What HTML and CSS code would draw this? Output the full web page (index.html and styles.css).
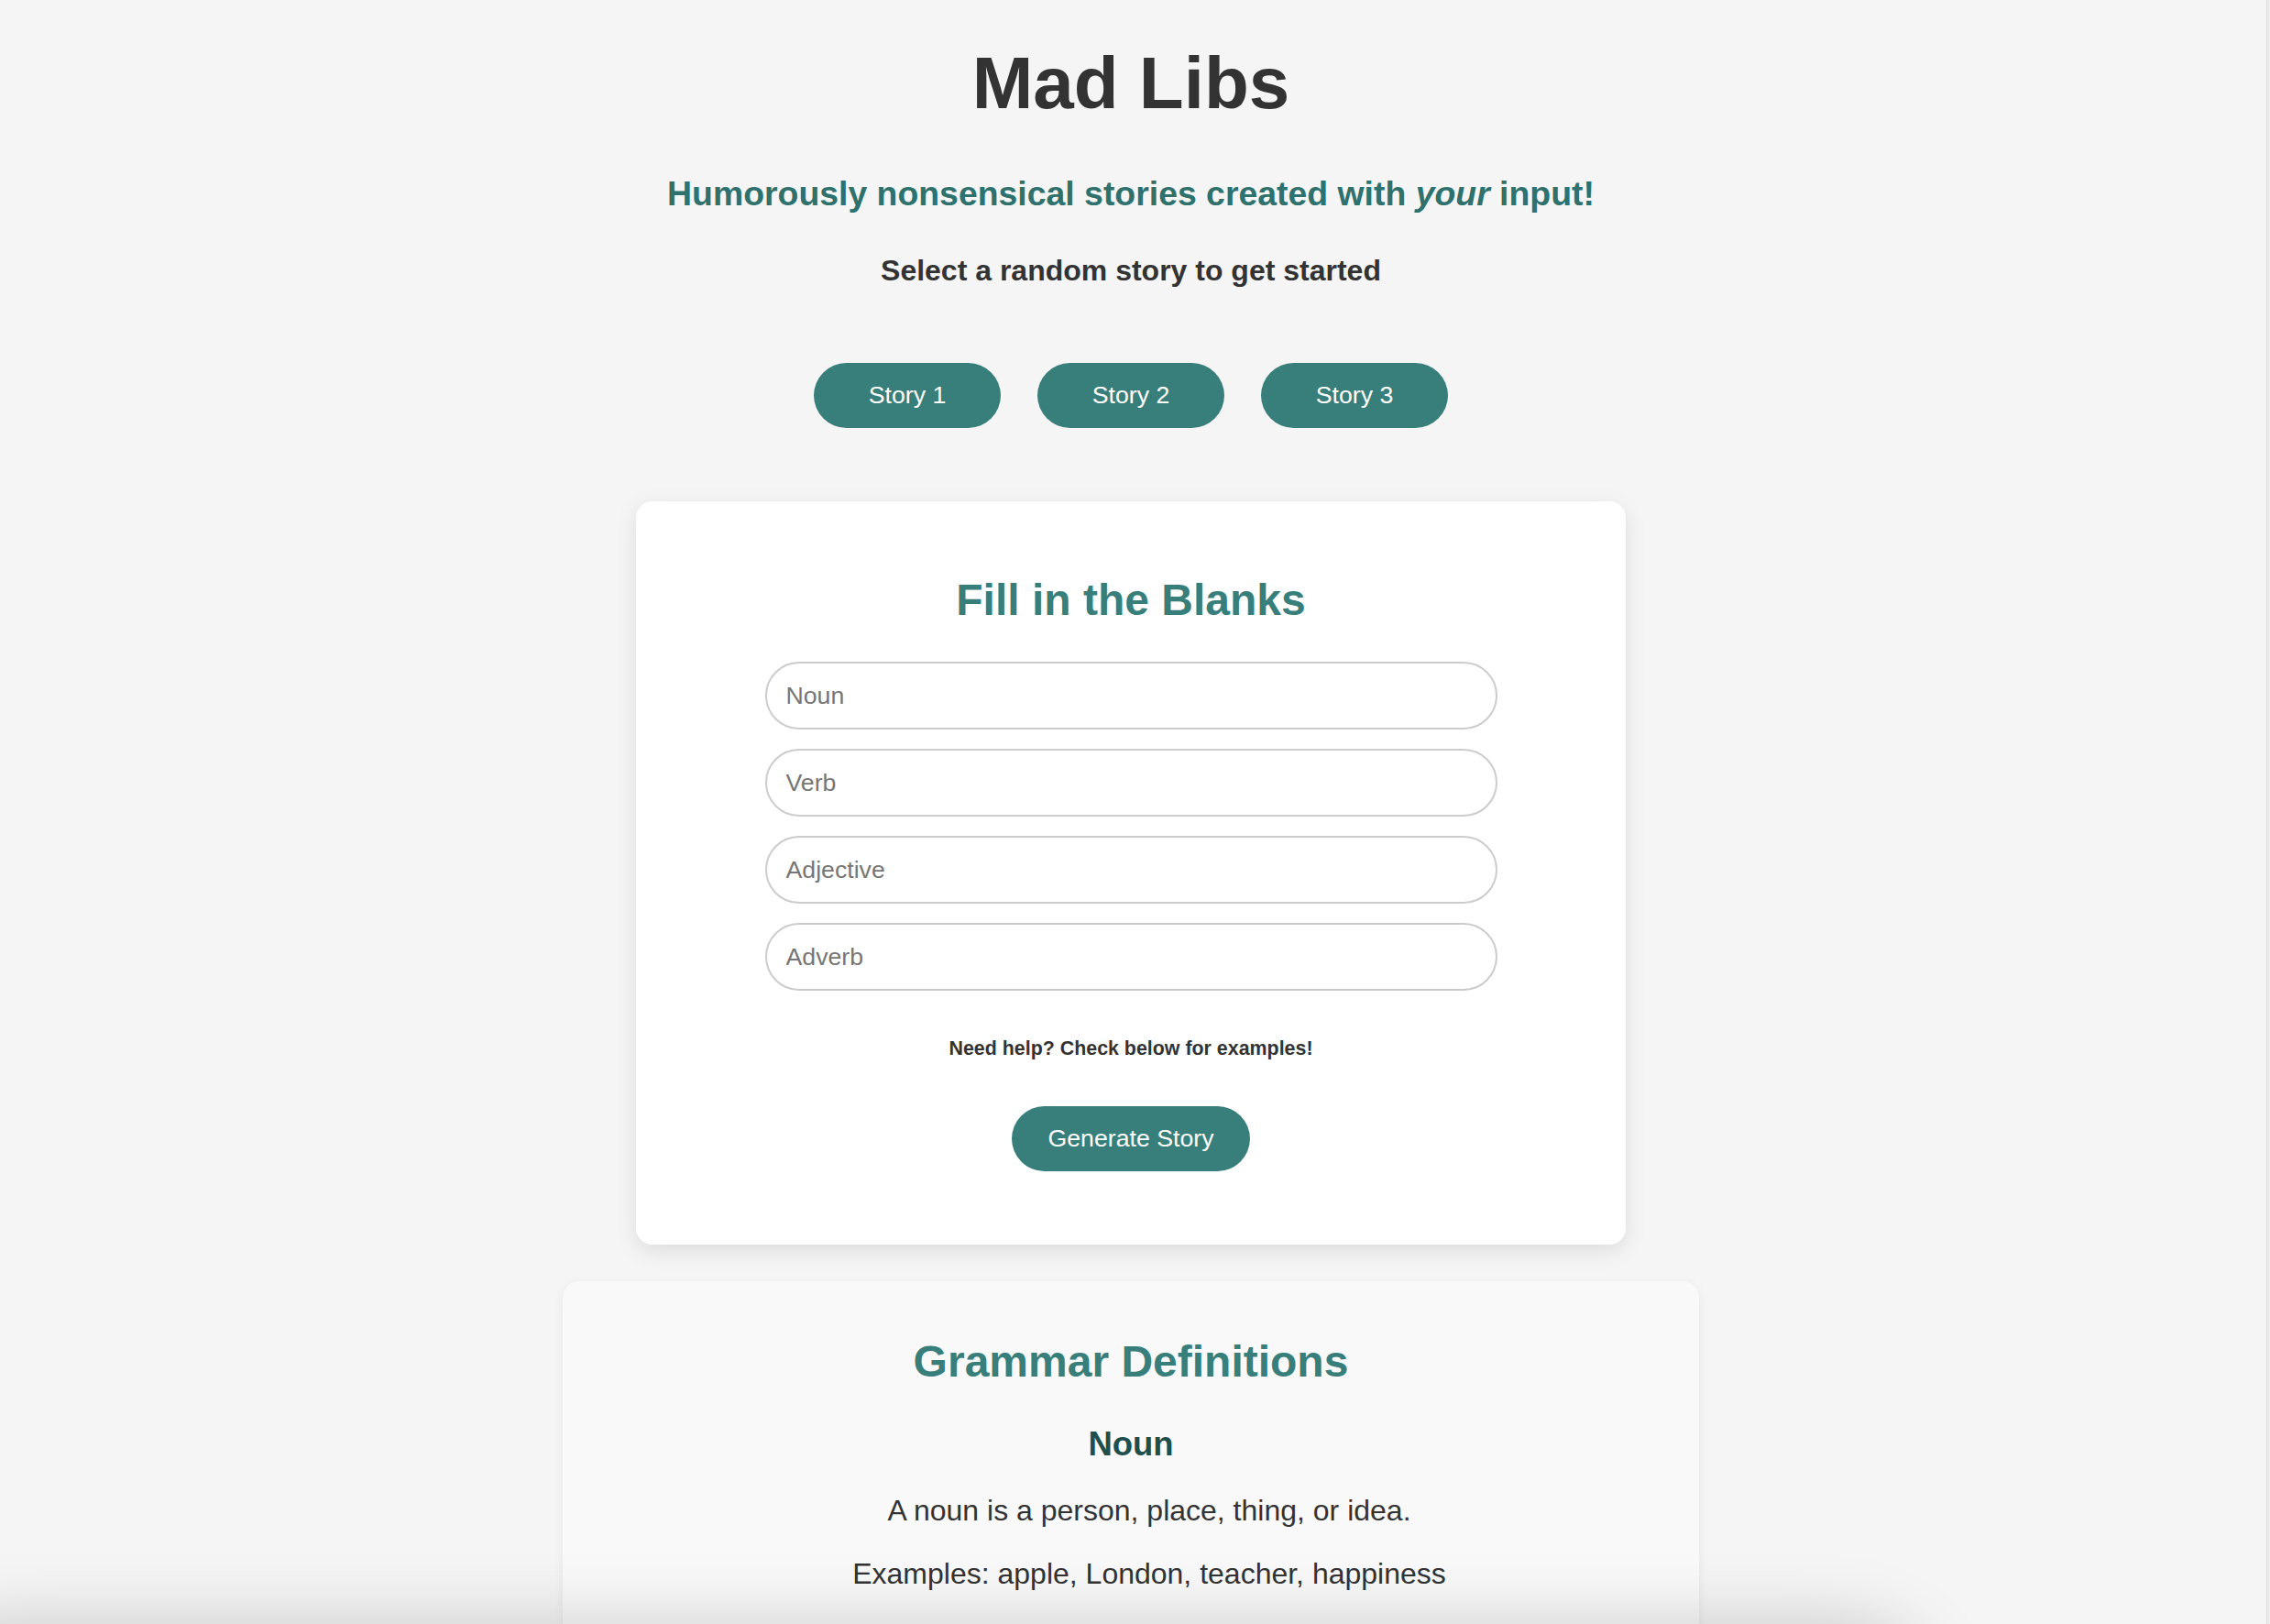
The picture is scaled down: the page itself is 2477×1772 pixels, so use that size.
FILE: index.html
```html
<!DOCTYPE html>
<html lang="en">
<head>
<meta charset="utf-8">
<title>Mad Libs</title>
<link rel="stylesheet" href="styles.css">
</head>
<body>
<main class="page">
  <header class="intro">
    <h1 class="title">Mad Libs</h1>
    <p class="tagline">Humorously nonsensical stories created with <em>your</em> input!</p>
    <p class="prompt">Select a random story to get started</p>
    <div class="story-picker">
      <button class="pill story-btn" type="button">Story 1</button>
      <button class="pill story-btn" type="button">Story 2</button>
      <button class="pill story-btn" type="button">Story 3</button>
    </div>
  </header>

  <section class="card blanks">
    <h2 class="section-title">Fill in the Blanks</h2>
    <form class="blank-form">
      <input class="field" type="text" placeholder="Noun">
      <input class="field" type="text" placeholder="Verb">
      <input class="field" type="text" placeholder="Adjective">
      <input class="field" type="text" placeholder="Adverb">
    </form>
    <p class="help">Need help? Check below for examples!</p>
    <button class="pill generate-btn" type="button">Generate Story</button>
  </section>

  <section class="card grammar">
    <h2 class="section-title">Grammar Definitions</h2>
    <dl class="glossary">
      <dt class="term">Noun</dt>
      <dd class="definition">A noun is a person, place, thing, or idea.</dd>
      <dd class="examples">Examples: apple, London, teacher, happiness</dd>
    </dl>
  </section>
</main>
<div class="bottom-shade"></div>
<div class="window-edge"></div>
</body>
</html>
```

FILE: styles.css
```css
html {
  overflow: hidden;
}

body {
  margin: 0;
  padding-right: 9px;
  background: #f5f5f5;
  color: #333333;
  font-family: "Liberation Sans", Arial, Helvetica, sans-serif;
  text-align: center;
}

.page {
  display: flex;
  flex-direction: column;
  align-items: center;
}

.intro {
  display: flex;
  flex-direction: column;
  align-items: center;
}

.title {
  margin: 45px 0 0;
  font-size: 80px;
  line-height: 92px;
  font-weight: 700;
  color: #333333;
}

.tagline {
  margin: 53px 0 0;
  font-size: 37.4px;
  line-height: 43px;
  font-weight: 700;
  color: #2e716d;
}

.tagline em {
  font-style: italic;
}

.prompt {
  margin: 44px 0 0;
  font-size: 32px;
  line-height: 37px;
  font-weight: 700;
  color: #333333;
}

.story-picker {
  display: flex;
  gap: 40px;
  margin-top: 82px;
}

.pill {
  height: 71px;
  border: none;
  border-radius: 36px;
  background: #387f7c;
  color: #ffffff;
  font-family: inherit;
  font-size: 26.7px;
  font-weight: 400;
  cursor: pointer;
}

.story-btn {
  width: 204px;
  padding: 0;
}

.generate-btn {
  width: 260px;
  padding: 0;
  margin-top: 50px;
}

.card {
  box-sizing: border-box;
  border-radius: 18px;
  display: flex;
  flex-direction: column;
  align-items: center;
}

.blanks {
  width: 1080px;
  margin-top: 80px;
  padding: 80px 0 80px;
  background: #ffffff;
  box-shadow: 0 7px 24px rgba(0, 0, 0, 0.1);
}

.grammar {
  width: 1240px;
  margin-top: 40px;
  padding: 60px 0 80px;
  background: #f9f9f9;
  box-shadow: 0 3px 12px rgba(0, 0, 0, 0.06);
}

.section-title {
  margin: 0;
  font-size: 48px;
  line-height: 55px;
  font-weight: 700;
  color: #387f7c;
}

.blank-form {
  display: flex;
  flex-direction: column;
  gap: 21px;
  margin-top: 40px;
}

.field {
  box-sizing: border-box;
  width: 799px;
  height: 74px;
  padding: 0 21px;
  border: 2px solid #cccccc;
  border-radius: 37px;
  background: #ffffff;
  font-family: inherit;
  font-size: 26.7px;
  color: #333333;
  outline: none;
}

.field::placeholder {
  color: #767676;
}

.help {
  margin: 51px 0 0;
  font-size: 21.4px;
  line-height: 25px;
  font-weight: 700;
  color: #333333;
}

.glossary {
  margin: 0;
  width: 100%;
}

.term {
  margin: 42px 0 0;
  font-size: 36.5px;
  line-height: 41px;
  font-weight: 700;
  color: #1e4f4d;
}

.definition {
  margin: 34px 0 0 40px;
  font-size: 32px;
  line-height: 37px;
  color: #333333;
}

.examples {
  margin: 32px 0 0 40px;
  font-size: 32px;
  line-height: 37px;
  color: #333333;
}

.bottom-shade {
  position: fixed;
  left: -100px;
  top: 100vh;
  width: 2210px;
  height: 200px;
  border-radius: 100px;
  box-shadow: 0 0 80px 0 rgba(0, 0, 0, 0.18);
  pointer-events: none;
}

.window-edge {
  position: fixed;
  top: 0;
  right: 0;
  width: 3px;
  height: 100vh;
  background: #ececec;
  border-left: 1px solid #dddddd;
}
```
